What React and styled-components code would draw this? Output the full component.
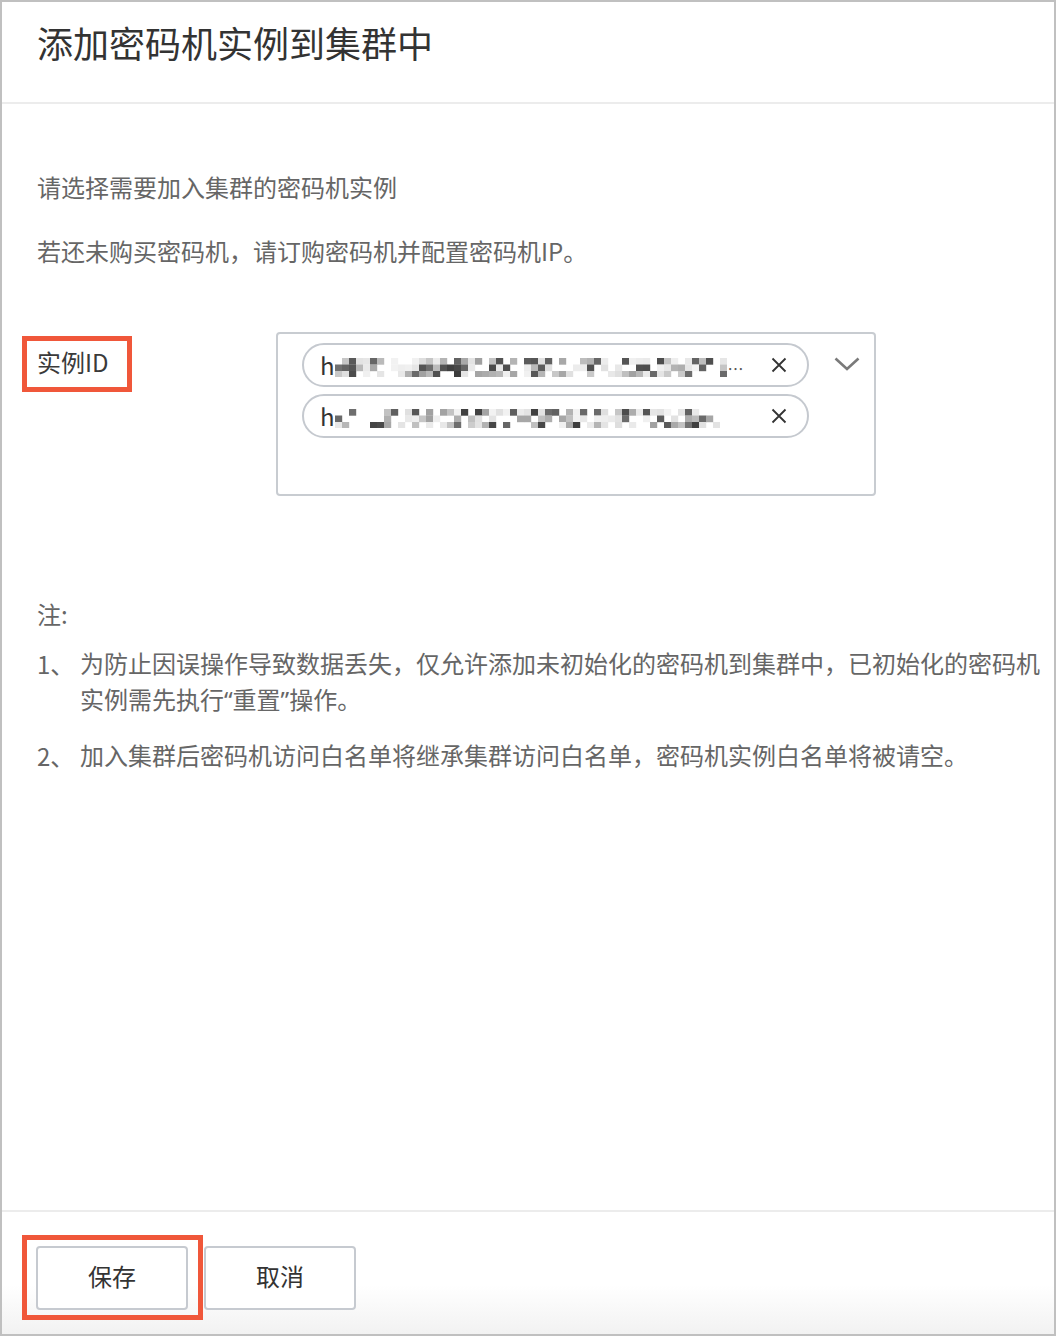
import React from "react";
import styled, { createGlobalStyle } from "styled-components";

const GlobalStyle = createGlobalStyle`
  html, body {
    margin: 0;
    padding: 0;
    background: #ffffff;
  }
  body {
    font-family: "Noto Sans CJK SC", "Noto Sans", sans-serif;
  }
  * { box-sizing: border-box; }
`;

const Frame = styled.div`
  width: 1056px;
  height: 1336px;
  border: 2px solid #c0c0c0;
  display: flex;
  flex-direction: column;
  background: #ffffff;
`;

const Header = styled.header`
  height: 102px;
  flex: none;
  padding: 16px 35px 0;
  border-bottom: 2px solid #ececec;
`;

const Title = styled.h1`
  margin: 0;
  font-size: 36px;
  line-height: 48px;
  font-weight: 400;
  color: #333333;
`;

const Body = styled.main`
  flex: 1;
  padding: 65px 14px 0 35px;
  color: #666666;
  font-size: 24px;
  line-height: 36px;
`;

const Para = styled.p`
  margin: 0 0 ${(p) => p.$gap || 28}px;
`;

const FormRow = styled.div`
  display: flex;
  align-items: flex-start;
  margin-top: 63px;
`;

const Label = styled.div`
  width: 239px;
  flex: none;
  padding-top: 12px;
`;

const LabelText = styled.span`
  position: relative;
  display: inline-block;
  color: #3a3a3a;
  font-size: 24px;
  line-height: 36px;
`;

/* red call-out rectangle drawn over an element */
const Callout = styled.span`
  position: absolute;
  top: ${(p) => p.$t}px;
  right: ${(p) => p.$r}px;
  bottom: ${(p) => p.$b}px;
  left: ${(p) => p.$l}px;
  border: 5px solid #f0573a;
  pointer-events: none;
`;

const Select = styled.div`
  width: 600px;
  height: 164px;
  border: 2px solid #c8ccd1;
  border-radius: 4px;
  padding: 9px 0 0 24px;
  display: flex;
  align-items: flex-start;
`;

const TagList = styled.div`
  display: flex;
  flex-direction: column;
  gap: 7px;
`;

const Tag = styled.div`
  width: 507px;
  height: 44px;
  border: 2px solid #c5c9cf;
  border-radius: 22px;
  display: flex;
  align-items: center;
  padding: 0 20px 0 16px;
  color: #333333;
  font-size: 24px;
`;

const TagValue = styled.span`
  display: flex;
  align-items: center;
  line-height: 1;
`;

const Ellipsis = styled.span`
  font-size: 16px;
  color: #555;
  margin-left: 1px;
  padding-top: 6px;
`;

const Remove = styled.span`
  margin-left: auto;
  display: flex;
  align-items: center;
`;

const Caret = styled.span`
  margin-left: 25px;
  margin-top: 14px;
  display: flex;
`;

const Notes = styled.div`
  margin-top: 100px;
`;

const NoteItem = styled.div`
  display: flex;
  margin-top: ${(p) => p.$top}px;
`;

const NoteMark = styled.span`
  flex: none;
  width: 43px;
`;

/* Latin face first so the curly quotes stay narrow; Chinese falls through to CJK */
const NoteText = styled.span`
  flex: 1;
  font-family: "Noto Sans", "Noto Sans CJK SC", sans-serif;
  text-align: justify;
  text-align-last: left;
`;

const Footer = styled.footer`
  height: 124px;
  flex: none;
  border-top: 2px solid #ececec;
  padding: 34px 34px 0;
  display: flex;
  gap: 16px;
  background: linear-gradient(#ffffff 0%, #ffffff 60%, #f2f2f2 100%);
`;

const Button = styled.button`
  position: relative;
  width: 152px;
  height: 64px;
  border: 2px solid #c6cad0;
  border-radius: 4px;
  background: #ffffff;
  color: #333333;
  font-family: inherit;
  font-size: 24px;
  padding: 0 0 5px;
  cursor: pointer;
`;

/* deterministic mosaic that stands in for a masked instance id */
function makeMosaic(seed, cols, rows, gaps = []) {
  let s = seed;
  const rnd = () => {
    s = (s * 16807) % 2147483647;
    return (s - 1) / 2147483646;
  };
  const cells = [];
  for (let c = 0; c < cols; c++) {
    const inGap = gaps.some(([a, b]) => c >= a && c <= b);
    for (let r = 0; r < rows; r++) {
      const v = rnd();
      if (inGap && v < 0.85) continue;
      let g;
      if (v < 0.28) continue;
      else if (v < 0.58) g = 222 + Math.floor(rnd() * 22);
      else if (v < 0.78) g = 160 + Math.floor(rnd() * 45);
      else g = 60 + Math.floor(rnd() * 55);
      cells.push({ c, r, g });
    }
  }
  return cells;
}

function Mosaic({ seed, cols, gaps }) {
  const cw = 7;
  const ch = 6.5;
  const rows = 3;
  const cells = makeMosaic(seed, cols, rows, gaps);
  return (
    <svg width={cols * cw} height={rows * ch} viewBox={`0 0 ${cols * cw} ${rows * ch}`} style={{ marginTop: 5 }}>
      {cells.map((k, i) => (
        <rect
          key={i}
          x={k.c * cw}
          y={k.r * ch}
          width={cw + 0.2}
          height={ch + 0.2}
          fill={`rgb(${k.g},${k.g},${k.g})`}
        />
      ))}
    </svg>
  );
}

const CloseIcon = () => (
  <svg width="16" height="16" viewBox="0 0 16 16">
    <path d="M1.5 1.5 L14.5 14.5 M14.5 1.5 L1.5 14.5" stroke="#333" strokeWidth="1.8" fill="none" />
  </svg>
);

const ChevronIcon = () => (
  <svg width="26" height="14" viewBox="0 0 26 14">
    <path d="M1.5 1.5 L13 12 L24.5 1.5" stroke="#7a7a7a" strokeWidth="2.6" fill="none" />
  </svg>
);

export default function App() {
  return (
    <>
      <GlobalStyle />
      <Frame>
        <Header>
          <Title>添加密码机实例到集群中</Title>
        </Header>
        <Body>
          <Para>请选择需要加入集群的密码机实例</Para>
          <Para $gap={0}>若还未购买密码机，请订购密码机并配置密码机IP。</Para>

          <FormRow>
            <Label>
              <LabelText>
                实例ID
                <Callout $t={-8} $r={-23} $b={-12} $l={-15} />
              </LabelText>
            </Label>
            <Select>
              <TagList>
                <Tag>
                  <TagValue>
                    h
                    <Mosaic seed={9137} cols={56} gaps={[]} />
                    <Ellipsis>…</Ellipsis>
                  </TagValue>
                  <Remove>
                    <CloseIcon />
                  </Remove>
                </Tag>
                <Tag>
                  <TagValue>
                    h
                    <Mosaic seed={4211} cols={55} gaps={[[3, 5]]} />
                  </TagValue>
                  <Remove>
                    <CloseIcon />
                  </Remove>
                </Tag>
              </TagList>
              <Caret>
                <ChevronIcon />
              </Caret>
            </Select>
          </FormRow>

          <Notes>
            <div>注:</div>
            <NoteItem $top={14}>
              <NoteMark>1、</NoteMark>
              <NoteText>
                为防止因误操作导致数据丢失，仅允许添加未初始化的密码机到集群中，已初始化的密码机实例需先执行“重置”操作。
              </NoteText>
            </NoteItem>
            <NoteItem $top={20}>
              <NoteMark>2、</NoteMark>
              <NoteText>加入集群后密码机访问白名单将继承集群访问白名单，密码机实例白名单将被请空。</NoteText>
            </NoteItem>
          </Notes>
        </Body>
        <Footer>
          <Button>
            保存
            <Callout $t={-13} $r={-17} $b={-12} $l={-16} />
          </Button>
          <Button>取消</Button>
        </Footer>
      </Frame>
    </>
  );
}
